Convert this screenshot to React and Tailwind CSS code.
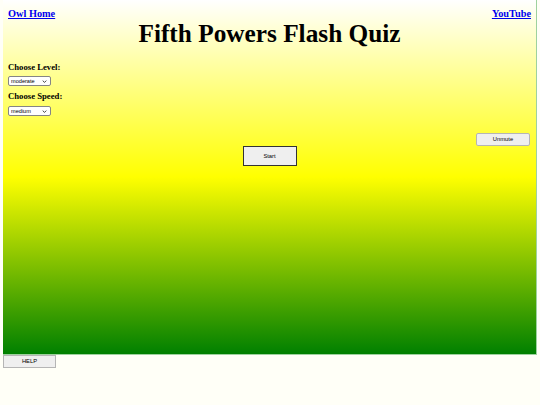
function TinySelect({ value, options, className = "" }) {
  return (
    <div className={`relative h-[10px] w-[43px] ${className}`}>
      <select
        defaultValue={value}
        className="block h-[10px] w-[43px] appearance-none rounded-[2px] border border-[#858585] bg-white pl-[2px] font-['Liberation_Sans',sans-serif] text-[5.6px] leading-[8px] text-black"
      >
        {options.map((o) => (
          <option key={o}>{o}</option>
        ))}
      </select>
      <svg
        viewBox="0 0 8 5"
        className="pointer-events-none absolute right-[4px] top-[3.5px] h-[3px] w-[5px]"
      >
        <path d="M1 1 L4 4 L7 1" fill="none" stroke="#222" strokeWidth="1.4" />
      </svg>
    </div>
  );
}

export default function App() {
  return (
    <div className="min-h-[405px] w-[540px] bg-[#fffff7] font-['Liberation_Serif',serif]">
      {/* Quiz panel */}
      <div className="ml-[3px] mr-[3px] h-[355px] border-b border-r border-[#9ed29e] bg-[linear-gradient(#ffffff,#ffff00,#008000)] px-[5px] pt-[8px]">
        <div className="flex items-start justify-between">
          <a href="#" className="text-[10.3px] font-bold leading-[12px] text-[#0000ee] underline">
            Owl Home
          </a>
          <a href="#" className="text-[10.3px] font-bold leading-[12px] text-[#0000ee] underline">
            YouTube
          </a>
        </div>

        <h1 className="-mt-[2px] text-center text-[25.3px] font-bold leading-[30px] text-black">
          Fifth Powers Flash Quiz
        </h1>

        <div className="mt-[13px] flex flex-col items-start">
          <h4 className="text-[8.7px] font-bold leading-[12px]">Choose Level:</h4>
          <TinySelect value="moderate" options={["easy", "moderate", "hard"]} className="mt-[3px]" />
          <h4 className="mt-[4px] text-[8.7px] font-bold leading-[12px]">Choose Speed:</h4>
          <TinySelect value="medium" options={["slow", "medium", "fast"]} className="mt-[4px]" />
        </div>

        <div className="mt-[17px] flex justify-end pr-[1px]">
          <button className="h-[13px] w-[54px] rounded-[2px] border border-[#b5b5b5] bg-[#efefef] font-['Liberation_Sans',sans-serif] text-[5.8px] text-black">
            Unmute
          </button>
        </div>

        <div className="flex justify-center">
          <button className="h-[20px] w-[54px] border border-[#333333] bg-[#efefef] font-['Liberation_Sans',sans-serif] text-[5.8px] text-black">
            Start
          </button>
        </div>
      </div>

      <button className="ml-[3px] block h-[13px] w-[53px] border border-[#b5b5b5] bg-[#efefef] font-['Liberation_Sans',sans-serif] text-[5.8px] text-black">
        HELP
      </button>
    </div>
  );
}
